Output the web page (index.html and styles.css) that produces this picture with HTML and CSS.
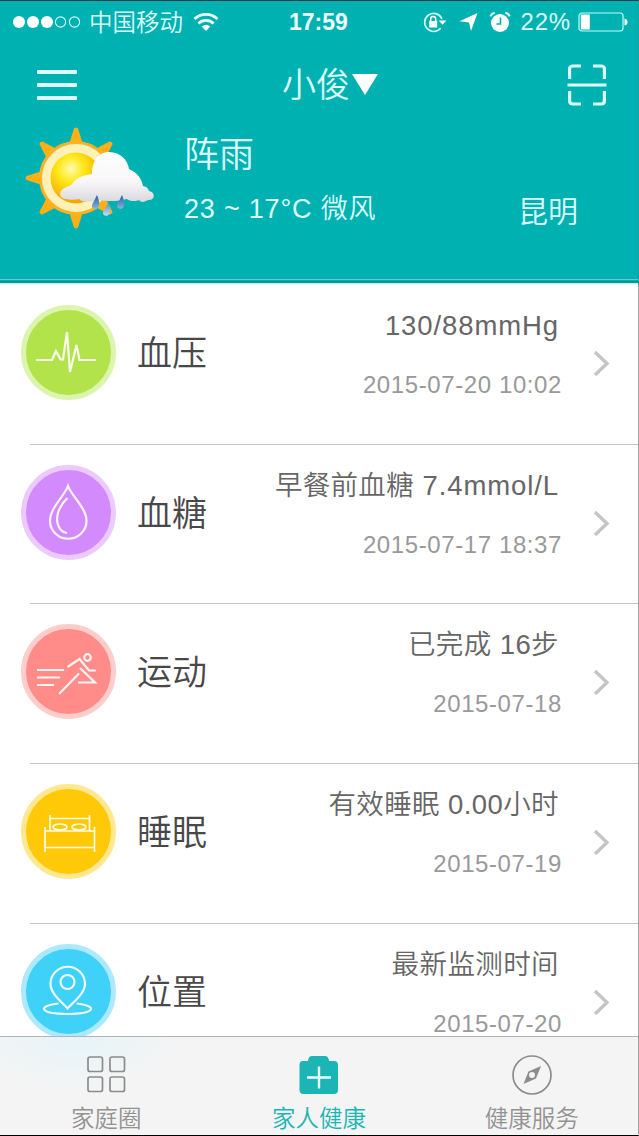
FILE: index.html
```html
<!DOCTYPE html>
<html lang="zh-CN">
<head>
	<meta charset="UTF-8">
	<title>家人健康</title>
	<link rel="stylesheet" href="styles.css">
</head>
<body>
	<div id="app">
		<header class="header">
			<div class="status">
				<div class="status-l">
					<svg class="dots" width="70" height="14" viewBox="0 0 70 14">
						<g fill="#fff"><circle cx="7" cy="7" r="6"/><circle cx="21" cy="7" r="6"/><circle cx="35" cy="7" r="6"/></g>
						<g fill="none" stroke="#d5ffff" stroke-width="1.1"><circle cx="48.5" cy="7" r="5.1"/><circle cx="62.5" cy="7" r="5.1"/></g>
					</svg>
					<span class="carrier">中国移动</span>
					<svg class="wifi" width="26" height="20" viewBox="0 0 26 20">
						<g fill="none" stroke="#eff" stroke-width="2.7"><path d="M1.5 7a16.6 16.6 0 0 1 23 0"/><path d="M5.4 11.4a11 11 0 0 1 15.2 0"/></g>
						<path fill="#fff" d="M8.7 14.5Q13 11 17.3 14.5L13 19z"/>
					</svg>
				</div>
				<div class="time">17:59</div>
				<div class="status-r">
					<svg width="24" height="22" viewBox="0 0 24 22">
						<path d="M17.6 17.2A9 9 0 1 1 19 8" fill="none" stroke="#dff" stroke-width="1.6"/>
						<path fill="#fff" d="M15.7 9.6h7.6l-3.8 4.2zM6.2 10h8v6.4h-8z"/>
						<path d="M7.7 10.5V8a2.5 2.5 0 0 1 5 0v2.5" fill="none" stroke="#fff" stroke-width="1.5"/>
					</svg>
					<svg class="gps" width="19" height="20" viewBox="0 0 19 20"><path fill="#fff" d="M18.5 1L12 19l-2-8.6L.5 9.2z"/></svg>
					<svg class="alarm" width="22" height="22" viewBox="0 0 22 22">
						<circle cx="11" cy="12" r="9" fill="#fff"/>
						<path d="M1.3 5.3Q2.6 2.6 5.6 1.8M20.7 5.3Q19.4 2.6 16.4 1.8" fill="none" stroke="#eff" stroke-width="2"/>
						<path d="M11.5 6.5V13H7.5" fill="none" stroke="#00b1b2" stroke-width="1.6"/>
					</svg>
					<span class="percent">22%</span>
					<svg width="50" height="20" viewBox="0 0 50 20">
						<rect x="1" y="1" width="44" height="18" rx="3" fill="none" stroke="#bff" stroke-width="1.2"/>
						<path fill="#fff" d="M2.8 2.5h9v15h-9zM46.5 6.5q3 .5 3 3.5t-3 3.5z"/>
					</svg>
				</div>
			</div>
			<nav class="nav">
				<div class="menu"><i></i><i></i><i></i></div>
				<div class="user"><span>小俊</span><b></b></div>
				<svg class="scan" width="40" height="42" viewBox="0 0 40 42" fill="none" stroke="#dff" stroke-width="3.2">
					<path d="M2.6 15V5Q2.6 2 6 2h8M26 2h8q3.4 0 3.4 3v10M2.6 27v10q0 3 3.4 3h8M26 40h8q3.4 0 3.4-3V27M.5 21h39"/>
				</svg>
			</nav>
			<div class="weather">
				<svg class="sun" width="132" height="106" viewBox="0 0 132 106">
					<defs>
						<radialGradient id="core" cx=".4" cy=".32" r=".65"><stop offset="0" stop-color="#fffbb0"/><stop offset=".4" stop-color="#ffe817"/><stop offset="1" stop-color="#f5a500"/></radialGradient>
						<linearGradient id="cloud" x1="0" y1="0" x2="0" y2="1"><stop offset="0" stop-color="#fff"/><stop offset=".6" stop-color="#f8f6f7"/><stop offset="1" stop-color="#d9d8df"/></linearGradient>
						<linearGradient id="rain" x1="0" y1="0" x2="0" y2="1"><stop offset="0" stop-color="#1b5fa8"/><stop offset="1" stop-color="#c4e0f5"/></linearGradient>
					</defs>
					<g fill="#fbb017">
						<path id="ray" d="M44.500 20L50 2.500q2-2 4 0L59.500 20z"/>
						<use href="#ray" transform="rotate(45 52 52)"/>
						<use href="#ray" transform="rotate(90 52 52)"/>
						<use href="#ray" transform="rotate(135 52 52)"/>
						<use href="#ray" transform="rotate(180 52 52)"/>
						<use href="#ray" transform="rotate(225 52 52)"/>
						<use href="#ray" transform="rotate(270 52 52)"/>
						<use href="#ray" transform="rotate(315 52 52)"/>
					</g>
					<circle cx="52" cy="52" r="35.500" fill="#fff1b8" stroke="#fbb323" stroke-width="3"/>
					<circle cx="52" cy="52" r="25.500" fill="url(#core)"/>
					<path fill="url(#cloud)" d="M42 73c-6 0-8-7-3-10 4-3 7-3 9-5 4-6 11-9 20-10 0-12 6-22 17-22 12 0 19 9 20 17 8 4 12 8 14 17 5 1 5 3 6 5 7 1 6 10-1 9-3 2-7 3-9 0-4 2-10 1-12-1-8 2-17 3-28 1-10 2-16 3-20-1-5 1-9 1-13 0z"/>
					<g fill="url(#rain)"><path d="M73 69q5 12-1 14-7-1-2-8zM98 69q5 12-1 14-7-1-2-8zM84 77q5 11-1 13-7-1-2-7z"/></g>
				</svg>
				<div class="weather-text">
					<h2>阵雨</h2>
					<p>23 ~ 17°C 微风</p>
				</div>
				<div class="city">昆明</div>
			</div>
		</header>

		<ul class="list">
			<li>
				<div class="icon green">
					<svg width="95" height="95" viewBox="0 0 95 95"><path d="M15 55h16l4-9 4.500 8.500h2.500L46 27l3 40 6.500-27 3 15H75"/></svg>
				</div>
				<h3>血压</h3>
				<div class="info"><p class="wide">130/88mmHg</p><time>2015-07-20 10:02</time></div>
				<svg class="arrow" width="17" height="27" viewBox="0 0 17 27"><path d="M2 2l12 11.500L2 25"/></svg>
			</li>
			<li>
				<div class="icon purple">
					<svg width="95" height="95" viewBox="0 0 95 95"><path d="M47 21C43.500 31 29 43 29 56a18 17.500 0 0 0 36.500 0C65.500 43 50.500 31 47 21zM46.500 33C36 43 35.500 53 36.500 58q2 9 9.500 10"/></svg>
				</div>
				<h3>血糖</h3>
				<div class="info"><p class="wide"><span>早餐前血糖</span> 7.4mmol/L</p><time>2015-07-17 18:37</time></div>
				<svg class="arrow" width="17" height="27" viewBox="0 0 17 27"><path d="M2 2l12 11.500L2 25"/></svg>
			</li>
			<li>
				<div class="icon red">
					<svg width="95" height="95" viewBox="0 0 95 95"><circle cx="66.500" cy="33.500" r="3.300"/><path d="M16 46h27M16 53.500h23M16 61h17M46.500 43l12-8 9.500 11.500h7M59 44l15 14.500H57M38 70l20-20.500"/></svg>
				</div>
				<h3>运动</h3>
				<div class="info"><p>已完成 16步</p><time>2015-07-18</time></div>
				<svg class="arrow" width="17" height="27" viewBox="0 0 17 27"><path d="M2 2l12 11.500L2 25"/></svg>
			</li>
			<li>
				<div class="icon yellow">
					<svg width="95" height="95" viewBox="0 0 95 95"><g stroke-width="1.700"><path d="M24 43v25M73.500 43v25M24 47h49.500M24 63.500h49.500M29 47V31M68.500 47V31M29 34.500h39.500"/><ellipse cx="39" cy="43" rx="7" ry="3"/><ellipse cx="58" cy="43" rx="7" ry="3"/></g></svg>
				</div>
				<h3>睡眠</h3>
				<div class="info"><p>有效睡眠 0.00小时</p><time>2015-07-19</time></div>
				<svg class="arrow" width="17" height="27" viewBox="0 0 17 27"><path d="M2 2l12 11.500L2 25"/></svg>
			</li>
			<li>
				<div class="icon blue">
					<svg width="95" height="95" viewBox="0 0 95 95"><circle cx="46.500" cy="38" r="7"/><path d="M46.500 64.500C42 59 29.500 50 29.500 40a17 17 0 0 1 34.500 0C64 50 51 59 46.500 64.500zM37.500 59.500C15 62 19 70 46.500 70S78 62 55.500 59.500"/></svg>
				</div>
				<h3>位置</h3>
				<div class="info"><p>最新监测时间</p><time>2015-07-20</time></div>
				<svg class="arrow" width="17" height="27" viewBox="0 0 17 27"><path d="M2 2l12 11.500L2 25"/></svg>
			</li>
		</ul>

		<footer class="tabbar">
			<a class="tab">
				<svg width="40" height="40" viewBox="0 0 40 40" fill="none" stroke="#8c8c8c" stroke-width="1.700"><rect x="2" y="2" width="14.500" height="14.500" rx="2"/><rect x="24" y="2" width="14.500" height="14.500" rx="2"/><rect x="2" y="22" width="14.500" height="14.500" rx="2"/><rect x="24" y="22" width="14.500" height="14.500" rx="2"/></svg>
				<span>家庭圈</span>
			</a>
			<a class="tab on">
				<svg width="40" height="40" viewBox="0 0 40 40"><path fill="#1bb5b6" d="M4 6h5q.500-5 4-5h13q3.500 0 4 5h5q4 0 4 4v25q0 4-4 4H4.500q-4 0-4-4V10q0-4 3.500-4z"/><path d="M8 22.500h24M20 11.500v22" stroke="#eff" stroke-width="2.400"/></svg>
				<span>家人健康</span>
			</a>
			<a class="tab">
				<svg width="40" height="40" viewBox="0 0 40 40"><circle cx="20" cy="20" r="19" fill="none" stroke="#8c8c8c" stroke-width="1.700"/><path fill="#8c8c8c" d="M29 11l-5 12.500L11.500 29l5-12.500z"/><circle cx="20" cy="20" r="3" fill="#f4f4f4"/></svg>
				<span>健康服务</span>
			</a>
		</footer>
	</div>
</body>
</html>
```
FILE: styles.css
```css
*{
	margin: 0;
	padding: 0;
	list-style: none;
	box-sizing: border-box;
}
body{
	width: 639px;
	height: 1136px;
	overflow: hidden;
	font-family: "Liberation Sans","Noto Sans CJK SC",sans-serif;
	font-weight: 350;
}
svg{
	display: block;
	flex-shrink: 0;
}
#app{
	width: 639px;
	height: 1136px;
	display: flex;
	flex-direction: column;
	border-top: 1px solid #123f49;
	border-right: 1px solid #a2a2a2;
	border-bottom: 1px solid #000;
	background: #fff;
}
/* 头部 */
.header{
	height: 284px;
	flex-shrink: 0;
	background: linear-gradient(#66cbd0 0 1px,#00b1b2 1px 2px,#0b9698 2px 4px,#c9edf0 4px 5px,#eef6f7 5px) 0 100%/100% 6px no-repeat #00b1b2;
	color: #dff;
	border-right: 1px solid #16a0a3;
	margin-right: -1px;
}
.status{
	height: 42px;
	padding: 0 10px 0 12px;
	display: grid;
	grid-template-columns: 277px 1fr auto;
	align-items: center;
}
.status-l,.status-r{
	display: flex;
	align-items: center;
	height: 42px;
}
.carrier{
	width: 94px;
	margin-left: 7px;
	font-size: 23.5px;
	line-height: 40px;
	white-space: nowrap;
	padding-top: 1px;
}
.wifi{
	margin-left: 10px;
}
.time{
	font-size: 23px;
	font-weight: bold;
	color: #eff;
}
.gps{
	margin-left: 12px;
}
.alarm{
	margin-left: 11px;
}
.percent{
	font-size: 24px;
	margin: 0 7px 0 10px;
	letter-spacing: .8px;
}
.nav{
	height: 80px;
	padding: 3px 31px 0 37px;
	display: grid;
	grid-template-columns: 245px 1fr auto;
	align-items: center;
}
.menu{
	width: 40px;
	display: flex;
	flex-direction: column;
	gap: 9px;
}
.menu i{
	height: 4px;
	border-radius: 1px;
	background: #dff;
}
.user{
	display: flex;
	align-items: center;
	font-size: 34px;
	line-height: 50px;
}
.user b{
	border: 13px solid transparent;
	border-top: 21px solid #fff;
	border-bottom: 0;
	margin-left: 2px;
}
.weather{
	display: flex;
	padding-left: 24px;
}
.sun{
	margin-top: 3px;
}
.weather-text{
	margin: 2px 0 0 28px;
	flex: 1;
}
.weather-text h2{
	font-size: 35px;
	font-weight: 350;
	line-height: 60px;
}
.weather-text p{
	font-size: 27px;
	line-height: 48px;
	letter-spacing: .8px;
}
.city{
	font-size: 30px;
	line-height: 40px;
	margin: 69px 60px 0 0;
}
/* 列表 */
.list{
	flex: 1;
	min-height: 0;
	overflow: hidden;
	background: #fff;
}
.list li{
	height: 159.7px;
	padding: 0 28px 0 21px;
	display: flex;
	align-items: flex-start;
	background: linear-gradient(#c4c4c4,#c4c4c4) 30px 100%/100% 1px no-repeat;
}
.icon{
	width: 95px;
	height: 95px;
	margin-top: 20px;
	border: 5px solid;
	border-radius: 50%;
	flex-shrink: 0;
}
.icon svg{
	margin: -5px;
	fill: none;
	stroke: #fff;
	stroke-opacity: .9;
	stroke-width: 2.2;
}
.green{
	background: #b2e34b;
	border-color: #dcf5ae;
}
.purple{
	background: #d28afc;
	border-color: #ebcbff;
}
.red{
	background: #ff8c88;
	border-color: #ffcdca;
}
.yellow{
	background: #ffc908;
	border-color: #ffe890;
}
.blue{
	background: #3fd1f8;
	border-color: #ade9fc;
}
.list h3{
	font-size: 35px;
	font-weight: 350;
	line-height: 60px;
	margin: 39px 0 0 21px;
	color: #484848;
}
.info{
	flex: 1;
	text-align: right;
	margin-right: 31px;
	white-space: nowrap;
}
.info p{
	font-size: 27.5px;
	line-height: 40px;
	margin-top: 21px;
	margin-right: 3px;
	letter-spacing: .4px;
	color: #666;
}
.info .wide{
	letter-spacing: .9px;
}
.wide span{
	letter-spacing: .3px;
}
.info time{
	display: block;
	font-size: 24px;
	line-height: 30px;
	margin-top: 24px;
	letter-spacing: .6px;
	color: #999;
}
.arrow{
	margin-top: 65px;
	fill: none;
	stroke: #c4c4c4;
	stroke-width: 3.3;
}
/* 底部 */
.tabbar{
	height: 99px;
	flex-shrink: 0;
	display: grid;
	grid-template-columns: repeat(3,1fr);
	border-top: 1px solid #b4b4b4;
	background: radial-gradient(ellipse 110px 50px at 75px 0,#e6f4f8,#f4f4f4);
}
.tab{
	display: flex;
	flex-direction: column;
	align-items: center;
	padding-top: 18px;
	font-size: 23.5px;
	color: #929292;
}
.tab span{
	line-height: 34px;
	margin-top: 7px;
}
.tab.on{
	color: #1bb5b6;
}
```
